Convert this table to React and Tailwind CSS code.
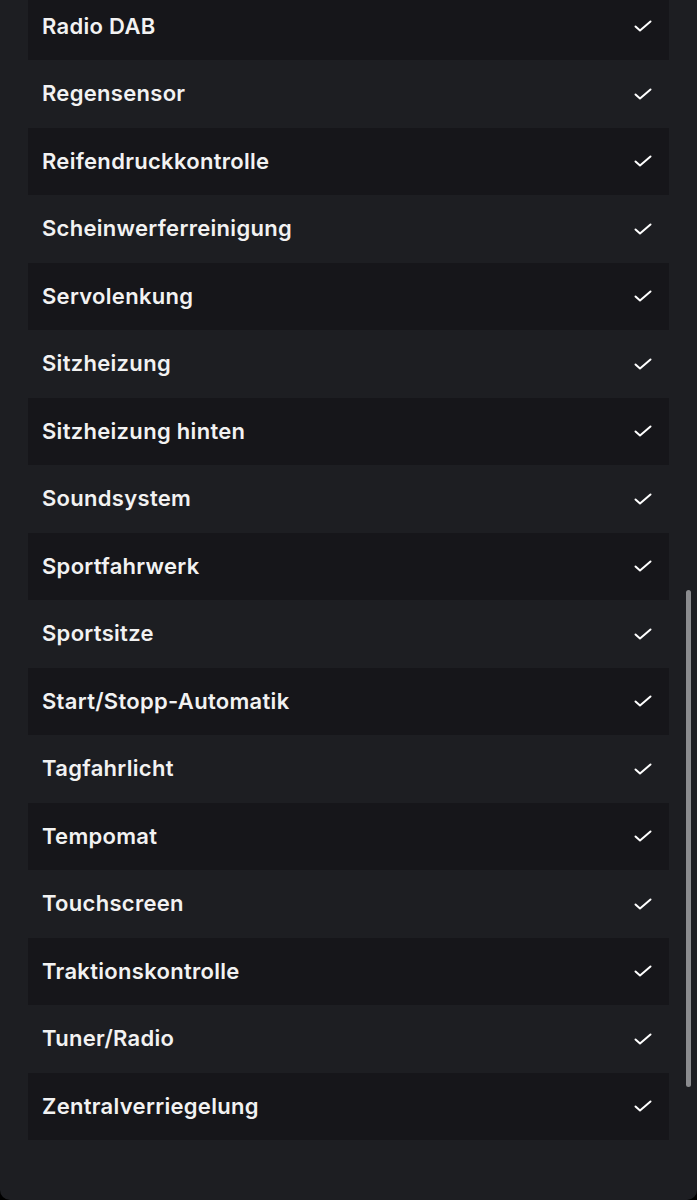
import React from 'react';

const FEATURES = [
  'Radio DAB',
  'Regensensor',
  'Reifendruckkontrolle',
  'Scheinwerferreinigung',
  'Servolenkung',
  'Sitzheizung',
  'Sitzheizung hinten',
  'Soundsystem',
  'Sportfahrwerk',
  'Sportsitze',
  'Start/Stopp-Automatik',
  'Tagfahrlicht',
  'Tempomat',
  'Touchscreen',
  'Traktionskontrolle',
  'Tuner/Radio',
  'Zentralverriegelung',
];

function Check() {
  return (
    <svg viewBox="0 0 18 12" fill="none" stroke="currentColor" strokeWidth={2} className="w-[18px] h-[12px] text-white">
      <path strokeLinecap="round" strokeLinejoin="round" d="M1.5 6.5L6 10.5L16.5 1.5" />
    </svg>
  );
}

export default function App() {
  return (
    <div className="bg-black h-[1200px] overflow-hidden">
      <div className="relative h-[1200px] bg-[#1d1e22] rounded-b-[10px] overflow-hidden" style={{ fontFamily: 'Inter, "Noto Sans", sans-serif' }}>
        <div className="flex flex-col px-[28px] mt-[-7.5px]">
          {FEATURES.map((name, i) => (
            <div
              key={name}
              className={`h-[67.5px] shrink-0 flex items-center justify-between pl-[14px] pr-[17px] ${
                i % 2 === 0 ? 'bg-[#16161a]' : ''
              }`}
            >
              <span className="text-[22px] font-semibold text-[#f2f2f2] tracking-[0.3px]">{name}</span>
              <Check />
            </div>
          ))}
        </div>

        {/* scrollbar thumb */}
        <div className="absolute right-[6px] top-[590px] w-[5px] h-[497px] rounded-full bg-[#8b8c8f]" />
      </div>
    </div>
  );
}
